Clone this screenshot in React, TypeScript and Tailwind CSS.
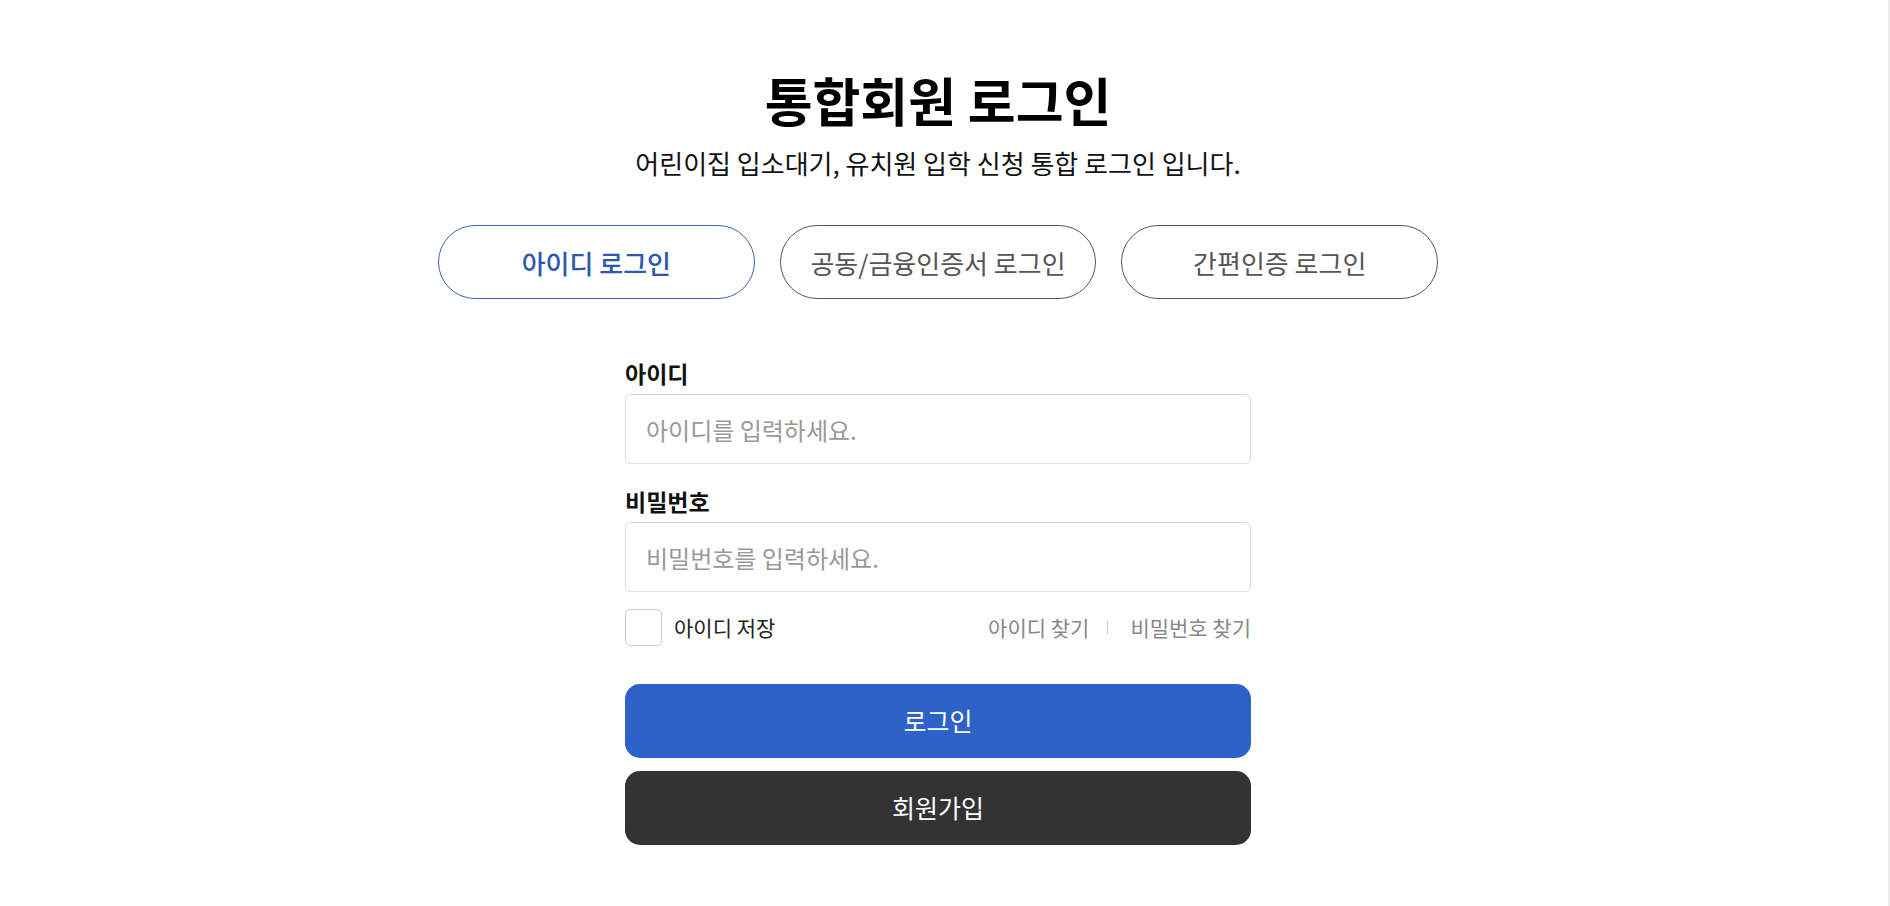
import React from "react";

const tabs = ["아이디 로그인", "공동/금융인증서 로그인", "간편인증 로그인"];

const LoginPage = () => {
  const [activeTab, setActiveTab] = React.useState(0);
  const [saveId, setSaveId] = React.useState(false);

  return (
    <div className="w-full min-h-screen flex bg-white font-['Noto_Sans_CJK_KR',sans-serif]">
      <div className="flex-1 pr-[12px]">
        <div className="w-[1000px] mx-auto pt-[68px] pb-[40px] flex flex-col">
          <h1 className="text-center text-[52px] leading-[64px] font-bold text-black">
            통합회원 로그인
          </h1>
          <p className="mt-[14px] text-center text-[26px] leading-[34px] text-[#111]">
            어린이집 입소대기, 유치원 입학 신청 통합 로그인 입니다.
          </p>

          <div className="mt-[45px] flex gap-[25px]">
            {tabs.map((tab, i) => (
              <button
                key={tab}
                type="button"
                onClick={() => setActiveTab(i)}
                className={
                  i === activeTab
                    ? "w-[317px] h-[74px] rounded-full border border-[#3d63b5] text-[#2c58b0] text-[26px] font-medium"
                    : "w-[317px] h-[74px] rounded-full border border-[#555] text-[#555] text-[26px]"
                }
              >
                {tab}
              </button>
            ))}
          </div>

          <form className="w-[626px] mx-auto mt-[60px] flex flex-col" onSubmit={(e) => e.preventDefault()}>
            <label className="text-[23px] leading-[28px] font-semibold text-[#111]">아이디</label>
            <input
              type="text"
              placeholder="아이디를 입력하세요."
              className="mt-[7px] h-[70px] w-full border border-[#ddd] rounded-[5px] px-[20px] text-[24px] text-[#222] placeholder:text-[#999] outline-none"
            />
            <label className="mt-[23px] text-[23px] leading-[28px] font-semibold text-[#111]">비밀번호</label>
            <input
              type="password"
              placeholder="비밀번호를 입력하세요."
              className="mt-[7px] h-[70px] w-full border border-[#ddd] rounded-[5px] px-[20px] text-[24px] text-[#222] placeholder:text-[#999] outline-none"
            />

            <div className="mt-[17px] h-[37px] flex items-center justify-between">
              <label className="flex items-center gap-[12px] cursor-pointer">
                <input
                  type="checkbox"
                  checked={saveId}
                  onChange={(e) => setSaveId(e.target.checked)}
                  className="appearance-none w-[37px] h-[37px] border border-[#ccc] rounded-[5px] checked:bg-[#2d63c8]"
                />
                <span className="text-[21px] text-[#222]">아이디 저장</span>
              </label>
              <div className="flex items-center text-[21px] text-[#888]">
                <a href="#">아이디 찾기</a>
                <span className="ml-[18px] mr-[22px] w-px h-[13px] bg-[#ccc]" />
                <a href="#">비밀번호 찾기</a>
              </div>
            </div>

            <button
              type="submit"
              className="mt-[38px] h-[74px] w-full rounded-[15px] bg-[#2d63c8] text-white text-[25px]"
            >
              로그인
            </button>
            <button
              type="button"
              className="mt-[13px] h-[74px] w-full rounded-[15px] bg-[#333] text-white text-[25px]"
            >
              회원가입
            </button>
          </form>
        </div>
      </div>
      <div className="w-[2px] bg-[#ececec]" />
    </div>
  );
};

export default LoginPage;
